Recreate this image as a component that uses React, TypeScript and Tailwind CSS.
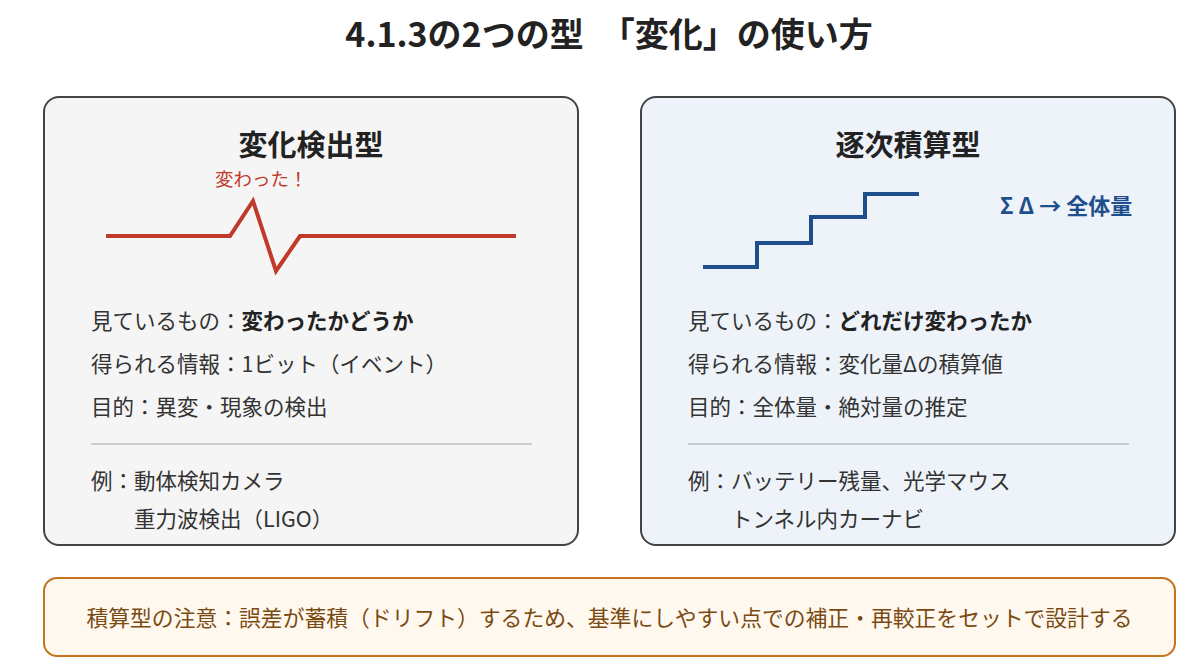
const font = "font-['Noto_Sans_CJK_JP','Noto_Sans',sans-serif]";

function Examples({ lines }: { lines: string[] }) {
  return (
    <div className="flex leading-[38px]">
      <span>例：</span>
      <div className="flex flex-col">
        {lines.map((l) => (
          <span key={l}>{l}</span>
        ))}
      </div>
    </div>
  );
}

function Card({
  title,
  bg,
  divider,
  diagram,
  watching,
  info,
  purpose,
  examples,
}: {
  title: string;
  bg: string;
  divider: string;
  diagram: React.ReactNode;
  watching: string;
  info: string;
  purpose: string;
  examples: string[];
}) {
  return (
    <div className={`w-[536px] h-[450px] border-2 border-[#444444] rounded-[16px] flex flex-col ${bg}`}>
      <h2 className="pt-[25px] text-center text-[29px] leading-[40px] font-bold text-[#222222]">{title}</h2>
      <div className="relative h-[135px]">{diagram}</div>
      <div className="pl-[46px] text-[21.5px] text-[#333333]">
        <p className="leading-[43px]">
          見ているもの：<b className="font-bold text-[#222222]">{watching}</b>
        </p>
        <p className="leading-[43px]">得られる情報：{info}</p>
        <p className="leading-[43px]">目的：{purpose}</p>
        <div className={`mt-[16px] mb-[16px] w-[441px] h-[2px] ${divider}`} />
        <Examples lines={examples} />
      </div>
    </div>
  );
}

function SpikeDiagram() {
  return (
    <>
      <svg className="absolute inset-0" width="532" height="137" viewBox="0 0 532 137">
        <polyline
          points="61,73 185,73 208,38 231,108 255,73 471,73"
          fill="none"
          stroke="#c0392b"
          strokeWidth="4"
        />
      </svg>
      <span className="absolute left-[170px] top-[3px] text-[18.5px] leading-[24px] text-[#c0392b]">変わった！</span>
    </>
  );
}

function StairDiagram() {
  return (
    <>
      <svg className="absolute inset-0" width="532" height="137" viewBox="0 0 532 137">
        <polyline
          points="61,104 115,104 115,80 169,80 169,54 223,54 223,31 277,31"
          fill="none"
          stroke="#1f4e8c"
          strokeWidth="4"
        />
      </svg>
      <span className="absolute left-[358px] top-[27px] text-[22px] leading-[28px] font-bold text-[#1f4e8c]">
        Σ Δ → 全体量
      </span>
    </>
  );
}

export default function App() {
  return (
    <div className={`w-[1200px] h-[664px] bg-white ${font}`}>
      <h1 className="pt-[11px] pl-[18px] h-[55px] text-center text-[34px] leading-[44px] font-bold text-[#222222]">
        4.1.3の2つの型　「変化」の使い方
      </h1>
      <div className="mt-[41px] pl-[43px] flex gap-[61px]">
        <Card
          title="変化検出型"
          bg="bg-[#f5f5f5]"
          divider="bg-[#cccccc]"
          diagram={<SpikeDiagram />}
          watching="変わったかどうか"
          info="1ビット（イベント）"
          purpose="異変・現象の検出"
          examples={["動体検知カメラ", "重力波検出（LIGO）"]}
        />
        <Card
          title="逐次積算型"
          bg="bg-[#eef3fa]"
          divider="bg-[#c6ccd4]"
          diagram={<StairDiagram />}
          watching="どれだけ変わったか"
          info="変化量Δの積算値"
          purpose="全体量・絶対量の推定"
          examples={["バッテリー残量、光学マウス", "トンネル内カーナビ"]}
        />
      </div>
      <div className="mt-[31px] ml-[43px] w-[1133px] h-[80px] border-2 border-[#c4741e] rounded-[14px] bg-[#fff8ee] flex items-center justify-center">
        <p className="text-[21.8px] text-[#7a4a12]">
          積算型の注意：誤差が蓄積（ドリフト）するため、基準にしやすい点での補正・再較正をセットで設計する
        </p>
      </div>
    </div>
  );
}
